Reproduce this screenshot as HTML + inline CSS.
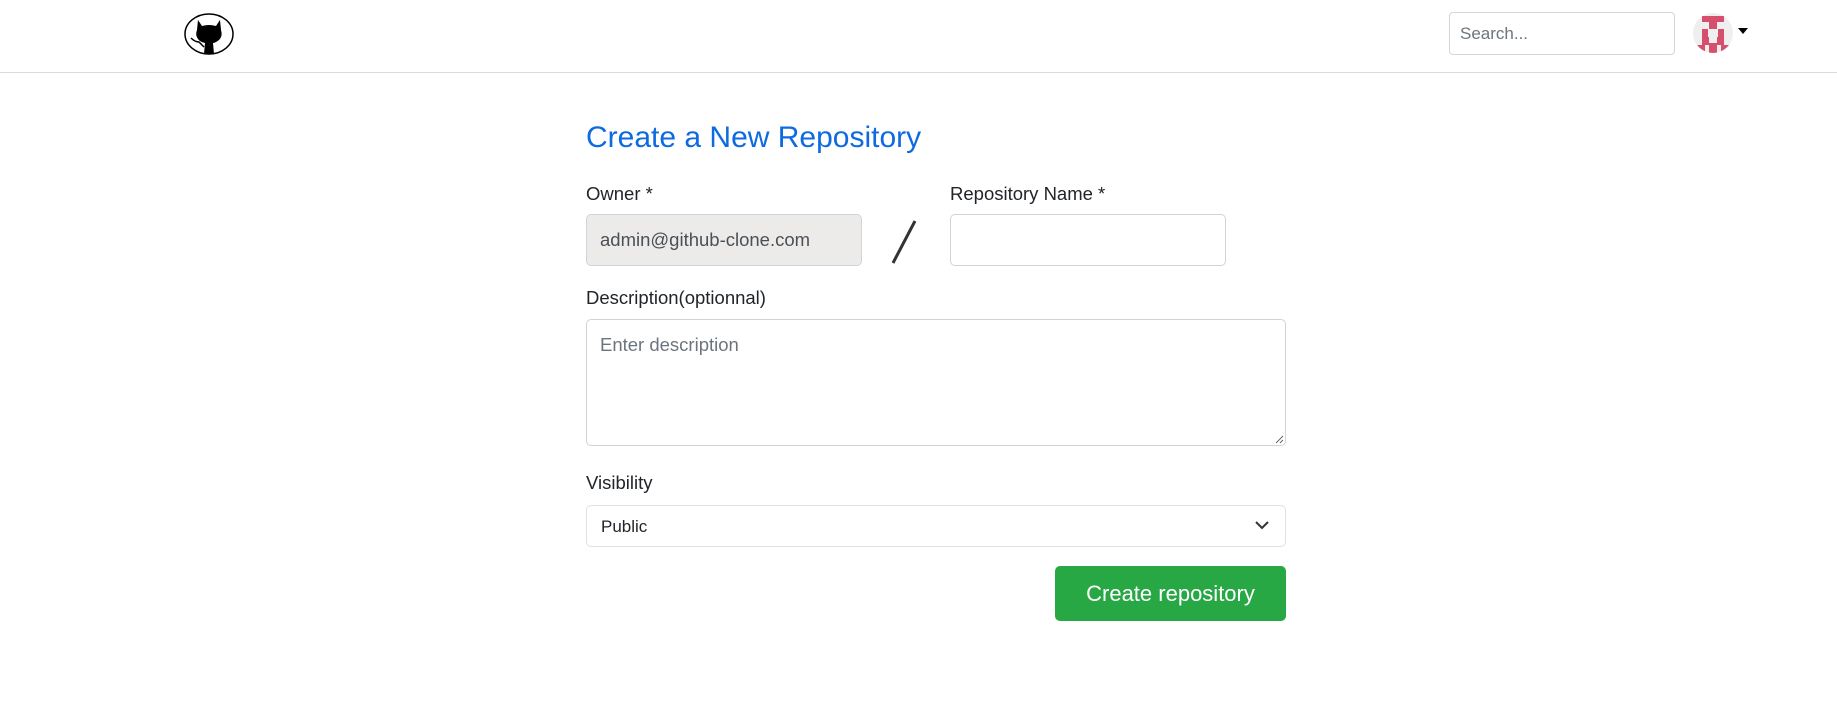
<!DOCTYPE html>
<html><head><meta charset="utf-8"><style>
*{box-sizing:border-box;margin:0;padding:0}
body{width:1837px;height:720px;background:#fff;font-family:"Liberation Sans",sans-serif;position:relative;overflow:hidden;color:#212529}
.nav{position:absolute;left:0;top:0;width:1837px;height:73px;border-bottom:1px solid #dcdcdc}
.abs{position:absolute}
.search{left:1449px;top:12px;width:226px;height:43px;border:1px solid #d6d6d6;border-radius:4px;font-size:17px;color:#6c757d;padding:11px 10px}
.avatar{left:1693px;top:13px;width:40px;height:40px;border-radius:50%;background:#efefef;overflow:hidden}
.lbl{font-size:18.5px;color:#212529}
.inp{border:1px solid #ced4da;border-radius:5px}
</style></head><body>
<div class="nav">
<svg class="abs" style="left:183px;top:12px" width="52" height="44" viewBox="0 0 52 44">
<ellipse cx="26" cy="22" rx="24" ry="20" fill="#fff" stroke="#000" stroke-width="1.5"/>
<path d="M15 8 L19 14 Q26 12 33 14 L37 8 L38 18 Q40 24 36 28 Q32 31 30 31 L31 42 L21 42 L22 31 Q17 30 15 27 Q12 23 14 18 Z" fill="#000"/>
<path d="M8 26 Q12 30 16 30 L21 35" fill="none" stroke="#000" stroke-width="1.5"/>
</svg>
<div class="abs search">Search...</div>
<div class="abs avatar">
<svg width="40" height="40" viewBox="0 0 40 40"><g fill="#d6506e">
<rect x="9" y="3" width="22" height="6"/><rect x="16" y="9" width="8" height="7"/>
<rect x="9" y="16" width="6" height="8"/><rect x="25" y="16" width="6" height="8"/>
<rect x="9" y="24" width="7" height="8"/><rect x="24" y="24" width="7" height="8"/><rect x="16" y="30" width="8" height="10"/>
<rect x="4" y="32" width="8" height="8"/><rect x="28" y="32" width="8" height="8"/></g></svg>
</div>
<div class="abs" style="left:1738px;top:28px;width:0;height:0;border-left:5px solid transparent;border-right:5px solid transparent;border-top:6px solid #000"></div>
</div>

<div class="abs" style="left:586px;top:121px;font-size:30px;color:#0d6ae0;white-space:nowrap">Create a New Repository</div>

<div class="abs lbl" style="left:586px;top:183px">Owner *</div>
<div class="abs lbl" style="left:950px;top:183px">Repository Name *</div>
<div class="abs inp" style="left:586px;top:214px;width:276px;height:52px;background:#edebe9;font-size:18.5px;color:#495057;padding:14px 13px;white-space:nowrap">admin@github-clone.com</div>
<svg class="abs" style="left:888px;top:219px" width="32" height="46"><line x1="27" y1="2" x2="5" y2="44" stroke="#333" stroke-width="3"/></svg>
<div class="abs inp" style="left:950px;top:214px;width:276px;height:52px"></div>

<div class="abs lbl" style="left:586px;top:287px">Description(optionnal)</div>
<div class="abs inp" style="left:586px;top:319px;width:700px;height:127px;font-size:18.5px;color:#6c757d;padding:14px 13px">Enter description</div>
<svg class="abs" style="left:1274px;top:434px" width="10" height="10"><line x1="2" y1="9" x2="9" y2="2" stroke="#666"/><line x1="6" y1="9" x2="9" y2="6" stroke="#666"/></svg>

<div class="abs lbl" style="left:586px;top:472px">Visibility</div>
<div class="abs" style="left:586px;top:505px;width:700px;height:42px;border:1px solid #dee2e6;border-radius:5px;font-size:17px;padding:11px 14px;color:#212529">Public</div>
<svg class="abs" style="left:1254px;top:519px" width="16" height="12"><path d="M2 3 L8 9 L14 3" fill="none" stroke="#333" stroke-width="2"/></svg>

<div class="abs" style="left:1055px;top:566px;width:231px;height:55px;background:#28a745;border-radius:5px;color:#fff;font-size:22px;text-align:center;line-height:55px">Create repository</div>
</body></html>
